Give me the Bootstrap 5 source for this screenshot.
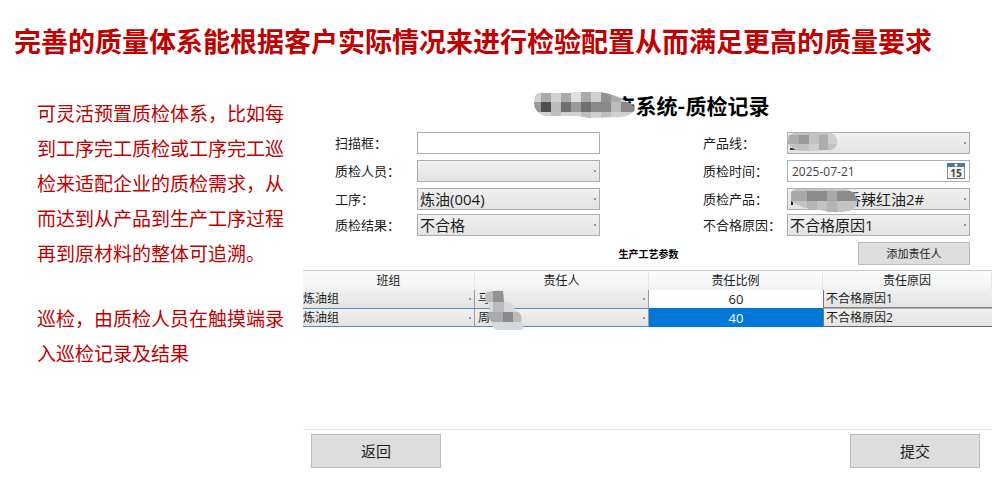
<!DOCTYPE html>
<html lang="zh-CN">
<head>
<meta charset="utf-8">
<meta name="viewport" content="width=device-width, initial-scale=1">
<title>质检记录</title>
<link href="https://cdn.jsdelivr.net/npm/bootstrap@5.3.0/dist/css/bootstrap.min.css" rel="stylesheet">
<style>
  body { font-family: "Open Sans", "Noto Sans CJK SC", sans-serif; color: #1c1c1c; background: #fff; }
  .headline { color: #c00000; font-size: 27px; line-height: 40px; padding: 22px 14px 0; }
  .layout { display: grid; grid-template-columns: 250px minmax(0, 1fr); column-gap: 16px; padding: 30px 8px 24px 37px; }
  .intro { color: #c00000; font-size: 19px; line-height: 35px; font-family: "Noto Sans CJK SC", sans-serif; padding-top: 3px; }
  .intro p { margin-bottom: 30px; }
  .panel-title { font-size: 21px; line-height: 26px; color: #000; padding-left: 89px; font-family: "Noto Sans CJK SC", sans-serif; }
  .panel-title .mosaic { left: 8px; top: 0; }
  .mosaic { position: absolute; pointer-events: none; }
  .fields { display: grid; grid-template-columns: 82px minmax(0, 1fr) 187px minmax(0, 1fr); grid-template-rows: 28px 28px 28px 24px; align-items: center; padding: 0 22px 0 32px; margin-top: 11px; }
  .fields label { font-size: 13px; line-height: 20px; }
  .fields .second { padding-left: 103px; }
  .field { height: 22px; min-height: 0; border: 1px solid #adadad; border-radius: 0; font-size: 15px; line-height: 20px; padding: 0 12px 0 2px; color: #1c1c1c; background-color: #fff; }
  .drop { background: radial-gradient(circle, #999 1px, transparent 1px) right 2px center / 4px 4px no-repeat, linear-gradient(#f0f0f0, #e3e3e3); }
  .field.dated { font-size: 12px; padding-left: 4px; border-color: #a3b3bd; color: #444; }
  .covered { padding-left: 58px; }
  .picker { position: absolute; right: 4px; top: 1px; line-height: 0; }
  .tools { display: grid; grid-template-columns: 1fr auto 1fr; align-items: center; padding: 5px 22px 5px 0; }
  .tools h3 { font-size: 10px; line-height: 16px; color: #000; grid-column: 2; padding-left: 24px; }
  .flat { background: #dddddd; border: 1px solid #bcbcbc; border-radius: 0; color: #1c1c1c; padding: 0; }
  .add { width: 112px; height: 23px; font-size: 11px; line-height: 20px; }
  .big { width: 130px; height: 34px; font-size: 15px; line-height: 30px; }
  .records { min-height: 160px; border-bottom: 1px solid #e6e6e6; }
  .grid { width: 100%; table-layout: fixed; font-size: 12px; line-height: 18px; border-collapse: separate; border-spacing: 0; }
  .grid .team-col { width: 172px; }
  .grid .wide-col { width: 174px; }
  .grid th { font-weight: 400; text-align: center; height: 20px; padding: 0; border-top: 1px solid #c9cdd1; border-right: 1px solid #e4e6e8; background: linear-gradient(#fbfbfb, #f1f2f3); }
  .grid td { height: 18px; padding: 0; text-align: center; position: relative; }
  .grid select { display: block; width: 100%; height: 18px; border: 0; border-right: 1px solid #9a9a9a; border-radius: 0; font-size: 12px; line-height: 18px; padding: 0 12px 0 0; appearance: none; color: #1c1c1c; }
  .grid .person select { padding-left: 3px; }
  .grid .ratio { font-size: 13px; }
  .grid .reason select { border-right: 0; border-left: 1px solid #777; border-bottom: 1px solid #888; padding-left: 2px; background: linear-gradient(#f0f0f0, #e3e3e3); }
  .grid .current select { height: 19px; border-top: 1px solid #4f8fc4; border-bottom: 1px solid #4f8fc4; }
  .grid .current .reason select { border-top-color: #aaa; border-bottom-color: #666; }
  .grid .current .ratio { background: #0078d7; color: #fff; }
  .actions { padding: 4px 12px 0 8px; }
</style>
</head>
<body>
<h1 class="headline fw-bold mb-0">完善的质量体系能根据客户实际情况来进行检验配置从而满足更高的质量要求</h1>
<main class="layout">
  <section class="intro">
    <p>可灵活预置质检体系，比如每到工序完工质检或工序完工巡检来适配企业的质检需求，从而达到从产品到生产工序过程再到原材料的整体可追溯。</p>
    <p class="mb-0">巡检，由质检人员在触摸端录入巡检记录及结果</p>
  </section>

  <form class="panel">
    <div class="d-flex justify-content-center">
      <h2 class="panel-title fw-bold mb-0 position-relative">产系统-质检记录
        <svg class="mosaic" width="102" height="27" viewBox="0 0 102 27" aria-hidden="true">
          <defs><clipPath id="blobTitle"><path d="M1 4Q4 0 10 1L35 1Q50-1 66 0Q84 3 95 11Q104 16 99 20Q92 27 78 25L55 26Q45 23 10 24Q0 20 0 10Z"/></clipPath></defs>
          <g clip-path="url(#blobTitle)">
            <path fill="#d0d0d0" d="M0 0h102v27H0z"/>
            <path fill="#aaa" d="M7 0h10v10H7zM27 0h10v10H27zM47 0h10v10H47zM77 0h10v10H77z"/>
            <path fill="#e2dede" d="M37 0h10v10H37z"/><path fill="#919191" d="M67 0h10v10H67z"/>
            <path fill="#999" d="M0 10h7v10H0zM37 10h10v10H37z"/><path fill="#505050" d="M7 10h10v10H7z"/>
            <path fill="#bbb" d="M17 10h10v10H17zM77 10h10v10H77z"/><path fill="#707070" d="M27 10h10v10H27zM47 10h10v10H47z"/>
            <path fill="#898989" d="M57 10h20v10H57zM87 10h15v10H87z"/>
            <path fill="#bebebe" d="M17 20h10v7H17zM47 20h10v7H47zM67 20h10v7H67z"/>
          </g>
        </svg>
      </h2>
    </div>

    <div class="fields">
      <label for="scan">扫描框：</label>
      <input id="scan" type="text" class="form-control field">
      <label for="line" class="second">产品线：</label>
      <div class="position-relative">
        <select id="line" class="form-select field drop"><option></option></select>
        <svg class="mosaic top-0 start-0" width="51" height="21" viewBox="0 0 51 21" aria-hidden="true">
          <path fill="#333" d="M3 16h7v2H3z"/>
          <defs><clipPath id="blobLine"><path d="M2 3Q8 0 15 1L40 0Q51 2 50 12Q48 19 40 18L15 19Q4 18 1 11Z"/></clipPath></defs>
          <g clip-path="url(#blobLine)"><path fill="#c2c2c2" d="M0 0h51v21H0z"/><path fill="#adadad" d="M0 3h12v9H0zM32 3h9v15h-9z"/><path fill="#999" d="M12 3h10v9H12z"/><path fill="#cfcfcf" d="M22 12h10v9H22zM41 0h10v12H41z"/></g>
        </svg>
      </div>

      <label for="staff">质检人员：</label>
      <select id="staff" class="form-select field drop"><option></option></select>
      <label for="date" class="second">质检时间：</label>
      <div class="position-relative">
        <input id="date" type="text" class="form-control field dated" value="2025-07-21">
        <button type="button" class="picker border-0 bg-transparent p-0" aria-label="选择日期">
          <svg width="20" height="20" viewBox="0 0 20 20" aria-hidden="true">
            <path fill="#f4f4f4" stroke="#8b9096" d="M1.500 2.500h17v15h-17z"/><path fill="#49799f" d="M1 2h18v4H1z"/>
            <circle cx="10" cy="4" r="1.500" fill="#fff"/><path fill="#777" d="M1 17h18v1H1z"/>
            <text x="10" y="15.500" text-anchor="middle" font-family="Open Sans, sans-serif" font-size="10" font-weight="700" fill="#444">15</text>
          </svg>
        </button>
      </div>

      <label for="step">工序：</label>
      <select id="step" class="form-select field drop"><option>炼油(004)</option></select>
      <label for="product" class="second">质检产品：</label>
      <div class="position-relative">
        <select id="product" class="form-select field drop covered"><option>香辣红油2#</option></select>
        <svg class="mosaic top-0 start-0" width="71" height="25" viewBox="0 0 71 25" aria-hidden="true">
          <path fill="#222" d="M4 13h2v4H4z"/>
          <defs><clipPath id="blobProduct"><path d="M4 4Q8 0 16 1L55 0Q66 2 70 10Q72 20 62 23Q48 26 32 22Q12 20 4 13Z"/></clipPath></defs>
          <g clip-path="url(#blobProduct)"><path fill="#c3c3c3" d="M0 0h71v25H0z"/><path fill="#a9a9a9" d="M0 3h20v10H0zM40 3h10v10H40z"/><path fill="#8b8b8b" d="M20 3h20v10H20zM50 3h21v10H50z"/><path fill="#b4b4b4" d="M20 13h10v12H20zM40 13h10v12H40z"/></g>
        </svg>
      </div>

      <label for="result">质检结果：</label>
      <select id="result" class="form-select field drop"><option>不合格</option></select>
      <label for="cause" class="second">不合格原因：</label>
      <select id="cause" class="form-select field drop"><option>不合格原因1</option></select>
    </div>

    <div class="tools">
      <h3 class="fw-bold mb-0">生产工艺参数</h3>
      <button type="button" class="btn flat add ms-auto">添加责任人</button>
    </div>

    <div class="records">
      <table class="grid">
        <colgroup><col class="team-col"><col class="wide-col"><col class="wide-col"><col></colgroup>
        <thead><tr><th scope="col">班组</th><th scope="col">责任人</th><th scope="col">责任比例</th><th scope="col">责任原因</th></tr></thead>
        <tbody>
          <tr>
            <td><select class="drop" aria-label="班组"><option>炼油组</option></select></td>
            <td class="person"><select class="drop" aria-label="责任人"><option>马</option></select>
              <svg class="mosaic top-0 start-0 ms-2 z-1" width="44" height="41" viewBox="0 0 44 41" aria-hidden="true">
                <defs><clipPath id="blobPeople"><path d="M2 3Q10 0 20 1L21 11Q30 12 32 20Q40 23 38 32Q43 37 38 40L14 40Q8 37 9 32Q4 28 6 22Q8 16 3 11Z"/></clipPath></defs>
                <g clip-path="url(#blobPeople)"><path fill="#d5d9df" d="M0 0h44v41H0z"/><path fill="#929292" d="M10 0h11v12H10z"/><path fill="#bcbcbc" d="M0 0h10v12H0zM10 12h11v10H10z"/><path fill="#aaa" d="M5 22h15v10H5z"/><path fill="#898989" d="M20 22h10v10H20z"/><path fill="#bbb" d="M30 22h10v10H30z"/></g>
              </svg>
            </td>
            <td class="ratio">60</td>
            <td class="reason"><select aria-label="责任原因"><option>不合格原因1</option></select></td>
          </tr>
          <tr class="current">
            <td><select class="drop" aria-label="班组"><option>炼油组</option></select></td>
            <td class="person"><select class="drop" aria-label="责任人"><option>周</option></select></td>
            <td class="ratio">40</td>
            <td class="reason"><select aria-label="责任原因"><option>不合格原因2</option></select></td>
          </tr>
        </tbody>
      </table>
    </div>

    <div class="actions d-flex justify-content-between">
      <button type="button" class="btn flat big">返回</button>
      <button type="submit" class="btn flat big">提交</button>
    </div>
  </form>
</main>
<script src="https://cdn.jsdelivr.net/npm/bootstrap@5.3.0/dist/js/bootstrap.bundle.min.js"></script>
</body>
</html>
